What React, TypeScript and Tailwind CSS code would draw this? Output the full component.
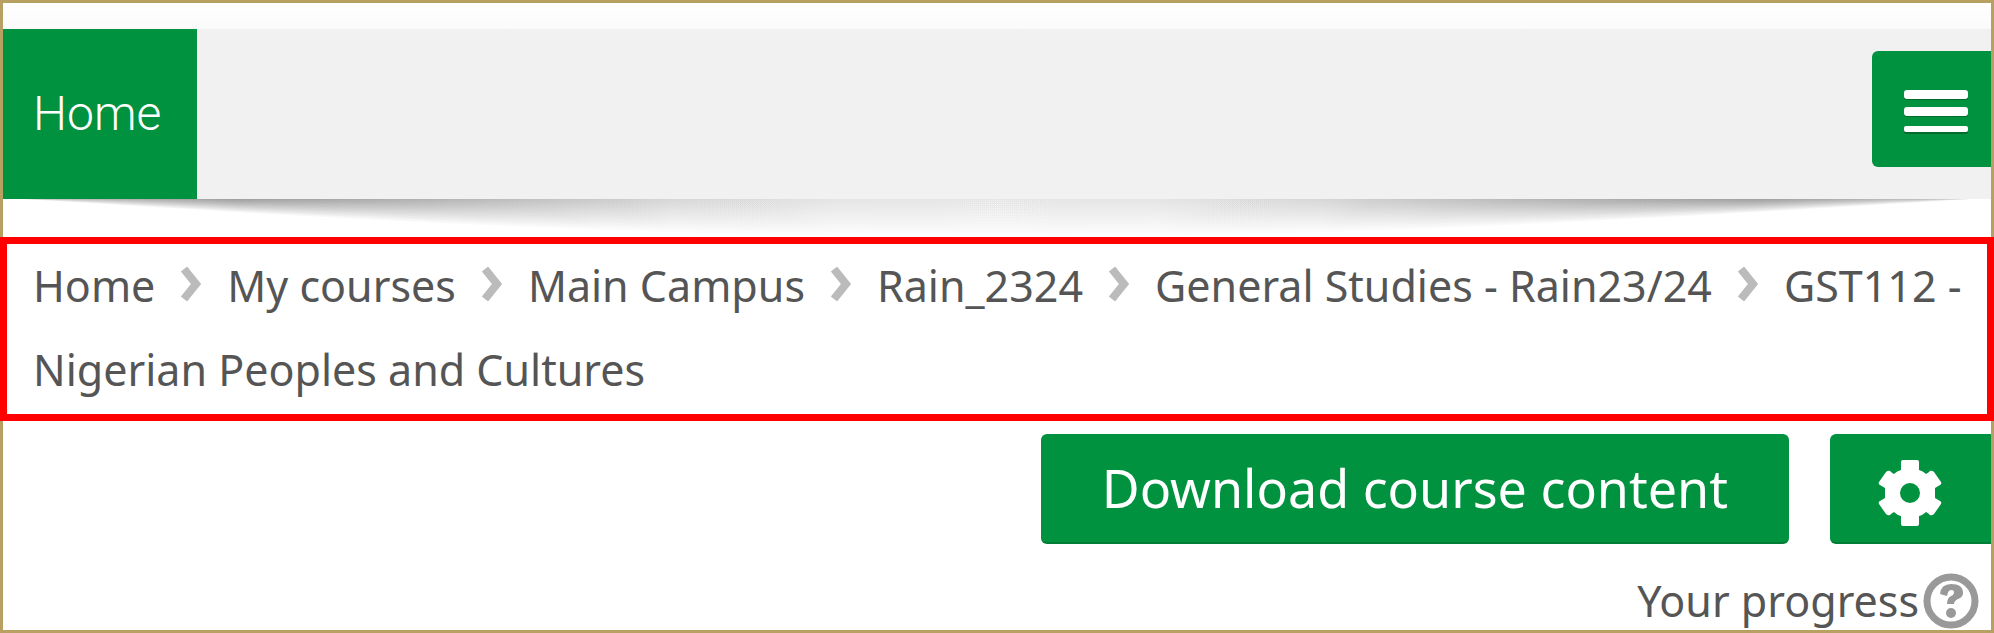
// each entry is one link; a long label is split where it may break
const crumbs = [
  ["Home"],
  ["My courses"],
  ["Main Campus"],
  ["Rain_2324"],
  ["General Studies - Rain23/24"],
  ["GST112 - ", "Nigerian Peoples and Cultures"],
];

export default function App() {
  return (
    <div className="bg-white font-['Noto_Sans',sans-serif] text-[#555]">
      <div className="border-[3px] border-[#b8a062] bg-white">
        <NavBar />
        <Breadcrumb />
        <CourseActions />
      </div>
    </div>
  );
}

function NavBar() {
  return (
    <header className="bg-linear-to-b from-white to-[#fafafa] bg-size-[100%_26px] bg-no-repeat pt-[26px]">
      <nav className="flex h-[170px] items-start justify-between bg-[#f1f1f1]">
        <a
          href="#"
          className="flex h-full items-center bg-[#00923f] pr-9 pl-[30px] font-['Roboto',sans-serif] text-[48px] font-light text-white"
        >
          Home
        </a>
        <button
          type="button"
          aria-label="Menu"
          className="mt-[22px] flex h-[116px] w-[119px] items-center rounded-l-md bg-[#00923f] pt-1 pl-8"
        >
          <svg viewBox="0 0 64 46" className="h-[46px] w-16" aria-hidden="true">
            <g fill="#006b2c">
              <rect y="4" width="64" height="8" rx="2" />
              <rect y="21" width="64" height="8" rx="2" />
              <rect y="39" width="64" height="7" rx="2" />
            </g>
            <g fill="#fff">
              <rect y="2" width="64" height="9" rx="3" />
              <rect y="19" width="64" height="9" rx="3" />
              <rect y="38" width="64" height="6" rx="2" />
            </g>
          </svg>
        </button>
      </nav>
      <BarShadow />
    </header>
  );
}

/** Curved drop shadow: thin and dark at the sides, deep and faint in the middle. */
function BarShadow() {
  const depths = [2, 5, 8, 11, 14, 17, 20, 23, 26, 29, 32, 35, 38];
  return (
    <svg
      viewBox="0 0 1988 38"
      preserveAspectRatio="none"
      className="block h-[38px] w-full"
      aria-hidden="true"
    >
      <defs>
        <linearGradient id="shade">
          <stop offset="0" stopOpacity="0.02" />
          <stop offset="0.11" stopOpacity="0.036" />
          <stop offset="0.2" stopOpacity="0.028" />
          <stop offset="0.35" stopOpacity="0.012" />
          <stop offset="0.5" stopOpacity="0.007" />
          <stop offset="0.65" stopOpacity="0.012" />
          <stop offset="0.8" stopOpacity="0.028" />
          <stop offset="0.89" stopOpacity="0.036" />
          <stop offset="1" stopOpacity="0.02" />
        </linearGradient>
      </defs>
      {depths.map((d) => (
        <path
          key={d}
          d={`M20 0 C500 ${d * 0.8} 750 ${d} 994 ${d} S1488 ${d * 0.8} 1968 0Z`}
          fill="url(#shade)"
        />
      ))}
    </svg>
  );
}

function Breadcrumb() {
  return (
    <nav
      aria-label="Breadcrumb"
      className="-mx-[3px] border-[7px] border-[#f00] pr-4 pb-0.5 pl-[26px] text-[43px] leading-[84px]"
    >
      <ol>
        {crumbs.map((parts, i) => (
          <li key={parts[0]} className="inline">
            {i > 0 && <Chevron />}
            <a href="#">
              {parts.map((part) => (
                <span key={part}>{part}</span>
              ))}
            </a>
          </li>
        ))}
      </ol>
    </nav>
  );
}

function Chevron() {
  return (
    <svg
      viewBox="0 0 22 34"
      className="mx-[25px] mb-3 inline-block h-[34px] w-[22px]"
      aria-hidden="true"
    >
      <path d="M4 2 L16 17 L4 32" fill="none" stroke="#bbb" strokeWidth="8" />
    </svg>
  );
}

function CourseActions() {
  return (
    <main className="pt-[13px]">
      <div className="flex justify-end gap-[41px]">
        <button
          type="button"
          className="h-[110px] rounded-md border-b-2 border-[#007d36] bg-[#00923f] px-[61px] text-[52px] text-white"
        >
          Download course content
        </button>
        <button
          type="button"
          aria-label="Settings"
          className="flex h-[110px] w-[161px] items-center rounded-l-md border-b-2 border-[#007d36] bg-[#00923f] pt-2.5 pl-12"
        >
          <Gear />
        </button>
      </div>
      <div className="flex h-[86px] items-center justify-end gap-1 pt-7 pr-3 text-[43px]">
        <span>Your progress</span>
        <button type="button" aria-label="Help with Your progress">
          <Help />
        </button>
      </div>
    </main>
  );
}

function Gear() {
  return (
    <svg viewBox="-32 -33 64 66" className="h-[66px] w-16 fill-white" aria-hidden="true">
      <path
        fillRule="evenodd"
        d="M-7 -33H7Q9 -33 9 -31V-23Q13 -22 16 -19Q18 -20 20 -22Q22 -23 24 -21L31 -11Q32 -9 30 -8L25 -5V5L30 8Q32 9 31 11L24 21Q22 23 20 22Q18 20 16 19Q13 22 9 23V31Q9 33 7 33H-7Q-9 33 -9 31V23Q-13 22 -16 19Q-18 20 -20 22Q-22 23 -24 21L-31 11Q-32 9 -30 8L-25 5V-5L-30 -8Q-32 -9 -31 -11L-24 -21Q-22 -23 -20 -22Q-18 -20 -16 -19Q-13 -22 -9 -23V-31Q-9 -33 -7 -33ZM10 0A10 10 0 1 0 -10 0A10 10 0 1 0 10 0Z"
      />
    </svg>
  );
}

function Help() {
  return (
    <svg viewBox="0 0 56 56" className="block size-14" aria-hidden="true">
      <circle cx="28" cy="28" r="24" fill="none" stroke="#999" strokeWidth="7" />
      <path
        d="M17 21Q18 11 28 11Q40 11 40 20Q40 24 35 26Q31 28 31 31H24Q24 25 28 23Q31 22 31 19Q31 17 28 17Q25 17 24 23Z"
        fill="#999"
      />
      <circle cx="28" cy="40" r="5" fill="#999" />
    </svg>
  );
}
